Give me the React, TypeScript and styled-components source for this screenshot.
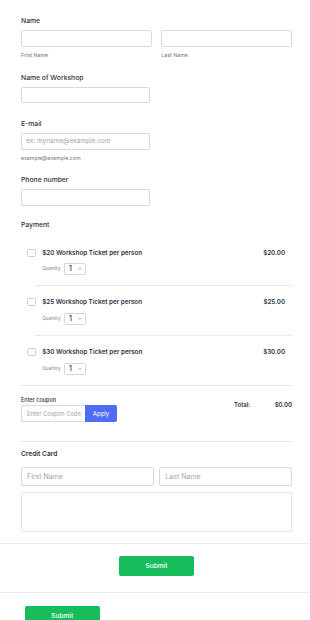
import styled, { createGlobalStyle } from "styled-components";

const GlobalStyle = createGlobalStyle`
  * { box-sizing: border-box; }
  body {
    margin: 0;
    background: #ffffff;
    font-family: Inter, "Liberation Sans", sans-serif;
    color: #2c3345;
  }
  input::placeholder, textarea::placeholder { color: #9ea4b3; }
`;

const Page = styled.div`
  width: 310px;
`;

const Form = styled.div`
  padding: 16px 18px 0 21px;
`;

const Field = styled.div<{ $space: number }>`
  margin-bottom: ${(p) => p.$space}px;
`;

const Label = styled.div`
  font-size: 6.8px;
  font-weight: 500;
  line-height: 9px;
  margin-bottom: 5px;
`;

const TextInput = styled.input<{ $w?: number }>`
  display: block;
  width: ${(p) => (p.$w ? `${p.$w}px` : "100%")};
  height: 16.5px;
  border: 1px solid #d8dae3;
  border-radius: 2px;
  padding: 0 4px;
  font-family: inherit;
  font-size: 6.5px;
  color: #2c3345;
  background: #fff;
  outline: none;
`;

const Sublabel = styled.div`
  font-size: 5.3px;
  line-height: 7px;
  margin-top: 5px;
  color: #6f7687;
`;

const TwoCols = styled.div<{ $gap: number }>`
  display: grid;
  grid-template-columns: 1fr 1fr;
  column-gap: ${(p) => p.$gap}px;
`;

const ProductList = styled.div`
  margin-top: 8px;
`;

const Product = styled.div`
  display: flex;
`;

const CheckCol = styled.div`
  padding: 12px 0 0 6.3px;
  width: 14.6px;
  flex-shrink: 0;
`;

const Checkbox = styled.div`
  width: 8.3px;
  height: 8px;
  border: 1px solid #ccd0d8;
  border-radius: 1.5px;
  background: #fff;
`;

const ProductBody = styled.div<{ $last?: boolean }>`
  flex: 1;
  display: flex;
  justify-content: space-between;
  align-items: flex-start;
  padding: 12px 7px 10.7px 6.6px;
  border-bottom: ${(p) => (p.$last ? "none" : "1px dotted #d5d8de")};
`;

const ProductTitle = styled.div`
  font-size: 6.3px;
  font-weight: 600;
  line-height: 8px;
`;

const QtyRow = styled.div`
  display: flex;
  align-items: center;
  gap: 3.5px;
  margin-top: 6.7px;
`;

const QtyLabel = styled.span`
  font-size: 4.6px;
  color: #7b8192;
`;

const Select = styled.div`
  width: 22px;
  height: 11.6px;
  border: 1px solid #d3d6de;
  border-radius: 1.5px;
  display: flex;
  align-items: center;
  justify-content: space-between;
  padding: 0 3px 0 4px;
  font-size: 7px;
  font-weight: 500;
`;

const Price = styled.div`
  font-size: 6.2px;
  font-weight: 600;
  line-height: 8px;
`;

const CouponSection = styled.div`
  border-top: 1px solid #e6e8ed;
  padding: 10.5px 0 18.5px;
  display: flex;
  justify-content: space-between;
  align-items: flex-start;
`;

const CouponLabel = styled.div`
  font-size: 5.5px;
  font-weight: 500;
  line-height: 7px;
  margin-bottom: 1.5px;
`;

const CouponRow = styled.div`
  display: flex;
`;

const CouponInput = styled.input`
  width: 64px;
  height: 17px;
  border: 1px solid #d9dce3;
  border-right: none;
  border-radius: 2px 0 0 2px;
  padding: 0 3px 0 5px;
  font-family: inherit;
  font-size: 5.8px;
  outline: none;
`;

const ApplyButton = styled.button`
  width: 32px;
  height: 17px;
  border: none;
  border-radius: 0 2px 2px 0;
  background: #4d6df5;
  color: #fff;
  font-family: inherit;
  font-size: 6px;
  padding: 0;
`;

const TotalRow = styled.div`
  width: 58px;
  margin-top: 4.2px;
  display: flex;
  justify-content: space-between;
  font-size: 6px;
  font-weight: 600;
  line-height: 8px;
`;

const CardSection = styled.div`
  border-top: 1px solid #e6e8ed;
  padding-top: 8px;
`;

const CardTitle = styled.div`
  font-size: 6.6px;
  font-weight: 600;
  line-height: 8px;
  margin-bottom: 9.2px;
`;

const CardInput = styled(TextInput)`
  height: 19.3px;
  font-size: 7px;
  padding: 0 5px;
`;

const CardArea = styled.textarea`
  display: block;
  width: 100%;
  height: 40.4px;
  margin-top: 5.3px;
  border: 1px solid #e2e4e9;
  border-radius: 2px;
  resize: none;
  outline: none;
`;

const Footer = styled.div<{ $center?: boolean }>`
  border-top: 1px solid #eaecef;
  display: flex;
  justify-content: ${(p) => (p.$center ? "center" : "flex-start")};
  padding: ${(p) => (p.$center ? "12.7px 0 16.7px 3px" : "13px 0 0 25px")};
  margin-top: ${(p) => (p.$center ? "10.6px" : "0")};
`;

const SubmitButton = styled.button`
  width: 74.5px;
  height: 19.3px;
  border: none;
  border-radius: 2px;
  background: #18bd5b;
  color: #fff;
  font-family: inherit;
  font-size: 6.5px;
  font-weight: 500;
  padding: 0;
`;

const Chevron = () => (
  <svg width="4" height="3" viewBox="0 0 8 5">
    <polyline points="1,1 4,4 7,1" fill="none" stroke="#6b7280" strokeWidth="1.2" />
  </svg>
);

const products = [
  { title: "$20 Workshop Ticket per person", price: "$20.00" },
  { title: "$25 Workshop Ticket per person", price: "$25.00" },
  { title: "$30 Workshop Ticket per person", price: "$30.00" },
];

export default function App() {
  return (
    <Page>
      <GlobalStyle />
      <Form>
        <Field $space={14}>
          <Label>Name</Label>
          <TwoCols $gap={9.5}>
            <div>
              <TextInput />
              <Sublabel>First Name</Sublabel>
            </div>
            <div>
              <TextInput />
              <Sublabel>Last Name</Sublabel>
            </div>
          </TwoCols>
        </Field>

        <Field $space={16}>
          <Label>Name of Workshop</Label>
          <TextInput $w={129} />
        </Field>

        <Field $space={13.5}>
          <Label>E-mail</Label>
          <TextInput $w={129} placeholder="ex: myname@example.com" />
          <Sublabel>example@example.com</Sublabel>
        </Field>

        <Field $space={14}>
          <Label>Phone number</Label>
          <TextInput $w={129} />
        </Field>

        <Label>Payment</Label>
        <ProductList>
          {products.map((p, i) => (
            <Product key={p.title}>
              <CheckCol>
                <Checkbox />
              </CheckCol>
              <ProductBody $last={i === products.length - 1}>
                <div>
                  <ProductTitle>{p.title}</ProductTitle>
                  <QtyRow>
                    <QtyLabel>Quantity</QtyLabel>
                    <Select>
                      <span>1</span>
                      <Chevron />
                    </Select>
                  </QtyRow>
                </div>
                <Price>{p.price}</Price>
              </ProductBody>
            </Product>
          ))}
        </ProductList>

        <CouponSection>
          <div>
            <CouponLabel>Enter coupon</CouponLabel>
            <CouponRow>
              <CouponInput placeholder="Enter Coupon Code" />
              <ApplyButton>Apply</ApplyButton>
            </CouponRow>
          </div>
          <TotalRow>
            <span>Total:</span>
            <span>$0.00</span>
          </TotalRow>
        </CouponSection>

        <CardSection>
          <CardTitle>Credit Card</CardTitle>
          <TwoCols $gap={5.7}>
            <CardInput placeholder="First Name" />
            <CardInput placeholder="Last Name" />
          </TwoCols>
          <CardArea />
        </CardSection>
      </Form>

      <Footer $center>
        <SubmitButton>Submit</SubmitButton>
      </Footer>
      <Footer>
        <SubmitButton>Submit</SubmitButton>
      </Footer>
    </Page>
  );
}
